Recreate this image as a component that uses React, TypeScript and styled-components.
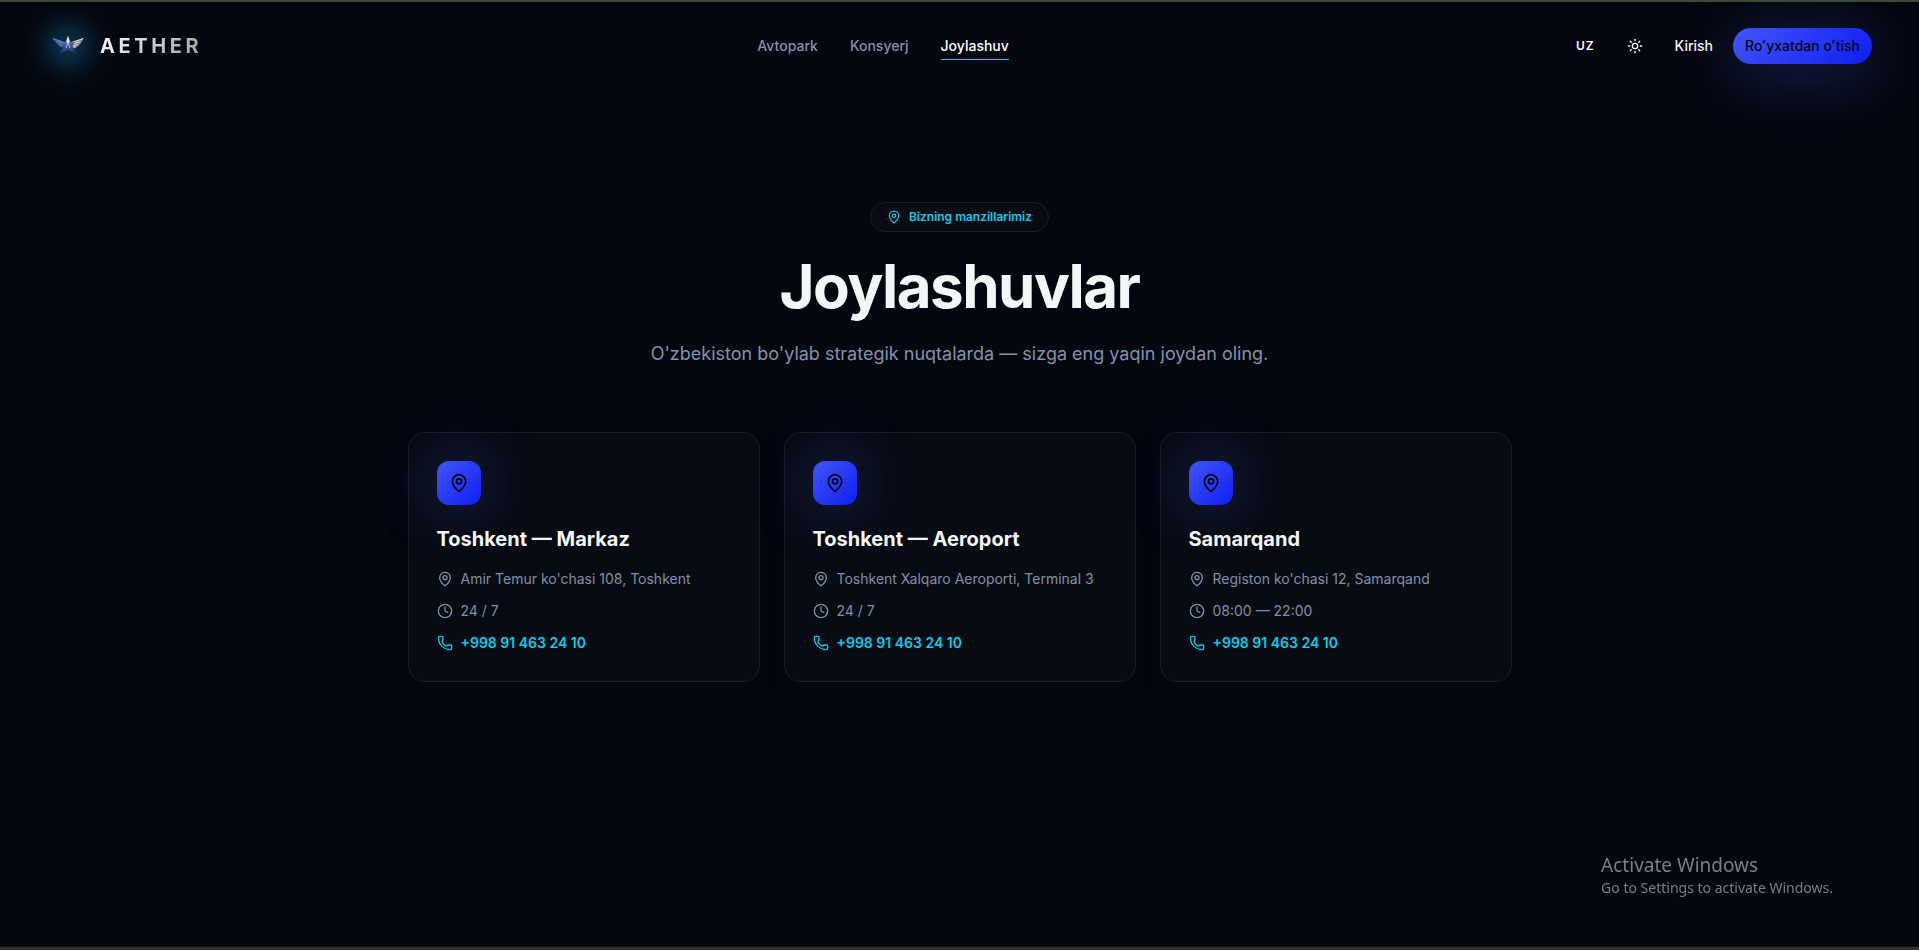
import React from "react";
import styled, { createGlobalStyle } from "styled-components";
import { Clock, MapPin, Phone, Sun } from "lucide-react";

const GlobalStyle = createGlobalStyle`
  *, *::before, *::after { box-sizing: border-box; }
  body {
    margin: 0;
    background: #04070f;
    color: #f4f5f7;
    font-family: Inter, "Liberation Sans", sans-serif;
    font-size: 14px;
    line-height: 20px;
  }
  h1, h2, p, ul { margin: 0; padding: 0; }
  button { font: inherit; }
`;

const Page = styled.div`
  display: flex;
  flex-direction: column;
  min-height: 100vh;
  overflow: hidden;
  border-top: 2px solid #3b4836;
  border-bottom: 3px solid #33322f;
`;

const Header = styled.header`
  display: flex;
  align-items: center;
  justify-content: space-between;
  height: 88px;
  padding: 0 47px 0 48px;
`;

const Brand = styled.a`
  display: flex;
  align-items: center;
  gap: 12px;
  text-decoration: none;
`;

const BrandMark = styled.svg`
  width: 40px;
  height: 40px;
  overflow: visible;
`;

const BrandName = styled.span`
  font-size: 20px;
  font-weight: 700;
  line-height: 28px;
  letter-spacing: 0.18em;
  color: transparent;
  background: linear-gradient(135deg, #ffffff, #9a9a9a);
  background-clip: text;
`;

const Nav = styled.nav`
  display: flex;
  gap: 32px;
`;

const NavLink = styled.a<{ $active?: boolean }>`
  padding: 4px 0 3px;
  border-bottom: 1px solid ${(p) => (p.$active ? "#06cdea" : "transparent")};
  color: ${(p) => (p.$active ? "#ffffff" : "#8591aa")};
  font-weight: 500;
  text-decoration: none;
`;

const Actions = styled.div`
  display: flex;
  align-items: center;
  gap: 8px;
`;

const PlainButton = styled.button`
  display: flex;
  align-items: center;
  justify-content: center;
  height: 36px;
  padding: 0 12px;
  border: 0;
  border-radius: 18px;
  background: none;
  color: #f8f9fb;
  font-weight: 500;
  cursor: pointer;
`;

const LanguageButton = styled(PlainButton)`
  font-size: 12px;
  font-weight: 600;
  letter-spacing: 1px;
`;

const PrimaryButton = styled(PlainButton)`
  background: linear-gradient(135deg, #4355fa, #0d1ff2);
  box-shadow: 0 10px 60px rgba(75, 80, 220, 0.4);
  color: #05070f;
`;

const Main = styled.main`
  display: flex;
  flex-direction: column;
  align-items: center;
  width: 100%;
  max-width: 1200px;
  margin: 0 auto;
  padding: 112px 48px 96px;
`;

const Badge = styled.div`
  display: flex;
  align-items: center;
  gap: 8px;
  padding: 6px 16px;
  border: 1px solid #1b1e27;
  border-radius: 15px;
  background: #080b14;
  color: #0bcdea;
  font-size: 12px;
  font-weight: 600;
  line-height: 16px;
`;

const Title = styled.h1`
  margin-top: 24px;
  font-size: 60px;
  font-weight: 700;
  line-height: 60px;
  letter-spacing: -0.025em;
  text-align: center;
`;

const Lead = styled.p`
  margin-top: 24px;
  color: #8591aa;
  font-size: 18px;
  line-height: 28px;
  text-align: center;
`;

const Grid = styled.div`
  display: grid;
  grid-template-columns: repeat(auto-fit, minmax(320px, 1fr));
  gap: 24px;
  width: 100%;
  margin-top: 64px;
`;

const Card = styled.article`
  padding: 28px;
  border: 1px solid #1a1d26;
  border-radius: 16px;
  background: #070b13;
  box-shadow: 0 8px 24px rgba(0, 0, 0, 0.1);
`;

const CardIcon = styled.div`
  display: flex;
  align-items: center;
  justify-content: center;
  width: 44px;
  height: 44px;
  border-radius: 12px;
  background: linear-gradient(135deg, #4355fa, #0d1ff2);
  box-shadow: 0 0 60px rgba(75, 75, 220, 0.45);
  color: #05070f;
`;

const CardTitle = styled.h2`
  margin-top: 20px;
  font-size: 20px;
  font-weight: 700;
  line-height: 28px;
`;

const Details = styled.ul`
  display: flex;
  flex-direction: column;
  gap: 12px;
  margin-top: 16px;
  list-style: none;
`;

const Detail = styled.li`
  display: flex;
  align-items: center;
  gap: 8px;
  color: #848fa5;
`;

const PhoneLink = styled.a`
  display: flex;
  align-items: center;
  gap: 8px;
  color: #0bcdea;
  font-weight: 600;
  text-decoration: none;
`;

const SystemNotice = styled.aside`
  position: fixed;
  right: 86px;
  bottom: 52px;
  color: #7d7e80;
  font-family: "Noto Sans", "Open Sans", sans-serif;
  font-size: 14px;
  line-height: 20px;
  pointer-events: none;
`;

const NoticeTitle = styled.p`
  font-size: 19px;
  line-height: 25px;
`;

const locations = [
  { name: "Toshkent — Markaz", address: "Amir Temur ko'chasi 108, Toshkent", hours: "24 / 7" },
  { name: "Toshkent — Aeroport", address: "Toshkent Xalqaro Aeroporti, Terminal 3", hours: "24 / 7" },
  { name: "Samarqand", address: "Registon ko'chasi 12, Samarqand", hours: "08:00 — 22:00" },
];

const phone = "+998 91 463 24 10";

function WingedStar() {
  return (
    <BrandMark viewBox="0 0 40 40" aria-hidden="true">
      <defs>
        <radialGradient id="halo">
          <stop offset="0" stopColor="#0b3d60" stopOpacity="0.7" />
          <stop offset="0.35" stopColor="#0b3654" stopOpacity="0.6" />
          <stop offset="0.65" stopColor="#092a40" stopOpacity="0.28" />
          <stop offset="1" stopColor="#061420" stopOpacity="0" />
        </radialGradient>
        <linearGradient id="star" x1="0" y1="0" x2="0" y2="1">
          <stop offset="0" stopColor="#c9d4ea" />
          <stop offset="0.4" stopColor="#4a64a8" />
          <stop offset="1" stopColor="#1b2460" />
        </linearGradient>
      </defs>
      <circle cx="20" cy="20" r="44" fill="url(#halo)" />
      <path d="M4 12l12 3.500 1.500 5.500-5 .5-2-2.500-1-.2-1-1.800-1-.5z" fill="#33508c" />
      <path d="M5 12.600l11 4M8 15.700l8 2.300M10 18.800l6 .7" stroke="#7f9ac8" strokeWidth=".8" />
      <path d="M36 12l-12 3.500-1.500 5.500 4.500 1.500 2-1.500 1-.8 1.500-1.500 1-1z" fill="#85807c" />
      <path d="M35 12.600l-11 4M32.500 15.700l-8 2.300M30 18.800l-6 .7M27.500 21l-3-.5" stroke="#e4ddd4" strokeWidth="1" />
      <path d="M20 10l2.300 6H27l-2.500 5 5 7.500L20 24 10.500 28.500l5-7.500-2.500-5h4.700z" fill="url(#star)" />
      <path d="M20 10l1.700 6-1.700 1.500-1.700-1.500z" fill="#e4e9f3" />
      <path d="M18 22l2-5.500 2 5.500" stroke="#c4d0ea" strokeWidth=".8" fill="none" />
    </BrandMark>
  );
}

export default function App() {
  return (
    <Page>
      <GlobalStyle />
      <Header>
        <Brand href="#">
          <WingedStar />
          <BrandName>AETHER</BrandName>
        </Brand>
        <Nav>
          <NavLink href="#avtopark">Avtopark</NavLink>
          <NavLink href="#konsyerj">Konsyerj</NavLink>
          <NavLink href="#joylashuv" $active aria-current="page">Joylashuv</NavLink>
        </Nav>
        <Actions>
          <LanguageButton>UZ</LanguageButton>
          <PlainButton aria-label="Mavzu">
            <Sun size={16} />
          </PlainButton>
          <PlainButton>Kirish</PlainButton>
          <PrimaryButton>Roʻyxatdan oʻtish</PrimaryButton>
        </Actions>
      </Header>
      <Main>
        <Badge>
          <MapPin size={14} />
          Bizning manzillarimiz
        </Badge>
        <Title>Joylashuvlar</Title>
        <Lead>O'zbekiston bo'ylab strategik nuqtalarda — sizga eng yaqin joydan oling.</Lead>
        <Grid>
          {locations.map((location) => (
            <Card key={location.name}>
              <CardIcon>
                <MapPin size={20} />
              </CardIcon>
              <CardTitle>{location.name}</CardTitle>
              <Details>
                <Detail>
                  <MapPin size={16} />
                  {location.address}
                </Detail>
                <Detail>
                  <Clock size={16} />
                  {location.hours}
                </Detail>
                <Detail>
                  <PhoneLink href={`tel:${phone.replace(/ /g, "")}`}>
                    <Phone size={16} />
                    {phone}
                  </PhoneLink>
                </Detail>
              </Details>
            </Card>
          ))}
        </Grid>
      </Main>
      <SystemNotice>
        <NoticeTitle>Activate Windows</NoticeTitle>
        <p>Go to Settings to activate Windows.</p>
      </SystemNotice>
    </Page>
  );
}
